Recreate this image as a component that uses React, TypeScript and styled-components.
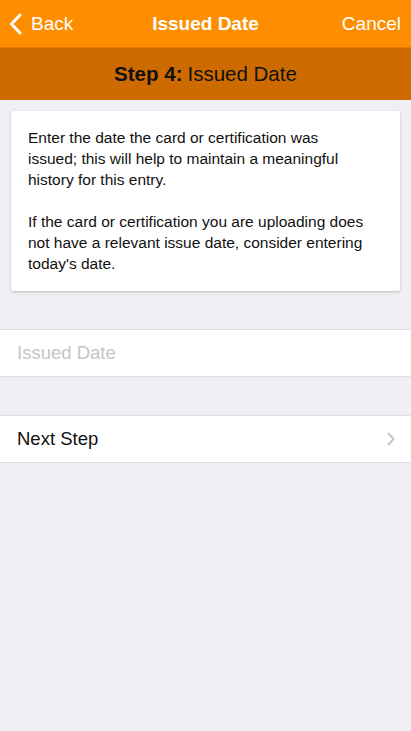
import React from 'react'
import styled, {createGlobalStyle} from 'styled-components'

const Global = createGlobalStyle`
  html, body {
    margin: 0;
    padding: 0;
    background: #efeff4;
    font-family: "Liberation Sans", Roboto, Arial, sans-serif;
    -webkit-font-smoothing: antialiased;
  }
`

const Page = styled.div`
  width: 411px;
  min-height: 731px;
  background: #efeff4;
  display: flex;
  flex-direction: column;
`

const NavBar = styled.div`
  height: 47px;
  background: #fe8e00;
  display: grid;
  grid-template-columns: 1fr auto 1fr;
  align-items: center;
  color: #fff;
  font-size: 19px;
`

const NavButton = styled.div<{$align: 'left' | 'right'}>`
  display: flex;
  align-items: center;
  justify-content: ${p => (p.$align === 'left' ? 'flex-start' : 'flex-end')};
  padding: ${p => (p.$align === 'left' ? '0 0 0 9px' : '0 10px 0 0')};
  gap: 9px;
`

const Title = styled.div`
  font-weight: bold;
  font-size: 19px;
`

const StepBar = styled.div`
  height: 52px;
  background: #cd6b00;
  border-top: 1px solid #e47a00;
  display: flex;
  align-items: center;
  justify-content: center;
  font-size: 20.5px;
  color: #111;
  b {
    margin-right: 5px;
  }
`

const Card = styled.div`
  margin: 11px 11px 0 11px;
  background: #fff;
  border-radius: 2px;
  box-shadow: 0 1px 3px rgba(0, 0, 0, 0.22);
  padding: 16px 32px 17px 17px;
  font-size: 15.5px;
  line-height: 21px;
  color: #111;
`

const Para = styled.p`
  margin: 0;
  & + & {
    margin-top: 21px;
  }
`

const Row = styled.div<{$top: number}>`
  margin-top: ${p => p.$top}px;
  height: 46px;
  background: #fff;
  border-top: 1px solid #dfdfe3;
  border-bottom: 1px solid #dfdfe3;
  display: flex;
  align-items: center;
  justify-content: space-between;
  padding: 0 16px 0 17px;
  font-size: 18.5px;
`

const Placeholder = styled.span`
  color: #c4c4c9;
`

const Label = styled.span`
  color: #111;
`

const Back = () => (
  <svg width="13" height="22" viewBox="0 0 13 22">
    <path d="M11 2 L2.5 11 L11 20" fill="none" stroke="#fff" strokeWidth="3" strokeLinecap="round" strokeLinejoin="round" />
  </svg>
)

const Chevron = () => (
  <svg width="8" height="14" viewBox="0 0 8 14">
    <path d="M1.5 1.5 L6.5 7 L1.5 12.5" fill="none" stroke="#c4c4c9" strokeWidth="2" strokeLinecap="round" strokeLinejoin="round" />
  </svg>
)

export default function App() {
  return (
    <Page>
      <Global />
      <NavBar>
        <NavButton $align="left">
          <Back />
          <span>Back</span>
        </NavButton>
        <Title>Issued Date</Title>
        <NavButton $align="right">Cancel</NavButton>
      </NavBar>
      <StepBar>
        <b>Step 4:</b> Issued Date
      </StepBar>
      <Card>
        <Para>
          Enter the date the card or certification was issued; this will help to maintain a meaningful
          history for this entry.
        </Para>
        <Para>
          If the card or certification you are uploading does not have a relevant issue date, consider
          entering today's date.
        </Para>
      </Card>
      <Row $top={38}>
        <Placeholder>Issued Date</Placeholder>
      </Row>
      <Row $top={38}>
        <Label>Next Step</Label>
        <Chevron />
      </Row>
    </Page>
  )
}
